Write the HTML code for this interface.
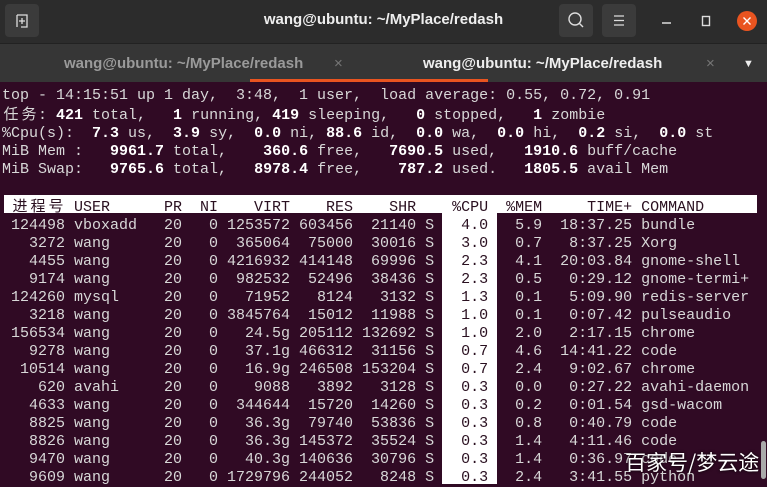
<!DOCTYPE html>
<html><head><meta charset="utf-8"><style>
*{margin:0;padding:0;box-sizing:border-box}
body{width:767px;height:484px;overflow:hidden;background:#300a24;position:relative;font-family:"Liberation Sans","Noto Sans CJK SC",sans-serif}
.title{position:absolute;left:0;top:0;width:767px;height:43px;background:#2c2c2c;}
.title .t{position:absolute;left:0;width:767px;top:11px;text-align:center;color:#eee;font-weight:bold;font-size:15px}
.btn{position:absolute;top:4px;width:34px;height:33px;background:#3b3b3b;border-radius:4px}
.tabs{position:absolute;left:0;top:43px;width:767px;height:39px;background:#363636;border-top:1px solid #222}
.tab{position:absolute;top:11px;font-size:15px;font-weight:bold}
pre{position:absolute;left:2px;top:87px;font-family:"Liberation Mono","Noto Sans CJK SC",monospace;font-size:15px;line-height:18px;color:#d8d8d8;letter-spacing:0}
b{color:#fff;font-weight:bold}
.c{display:inline-block;width:18px;text-align:center;font-family:"Noto Sans CJK SC",sans-serif}
.d{color:#2a1020}
.hdr{position:absolute;left:4px;top:195px;width:753px;height:18px;background:#fff}
.col{position:absolute;left:442px;top:213px;width:55px;height:271px;background:#fff}
</style></head><body>
<div class="title">
 <div class="btn" style="left:5px"><svg width="34" height="33"><path d="M12 11v12M12 11h10v12h-6M17 14v6M14 17h6" stroke="#ddd" stroke-width="1.3" fill="none"/></svg></div>
 <div class="t">wang@ubuntu: ~/MyPlace/redash</div>
 <div class="btn" style="left:559px"><svg width="34" height="33"><circle cx="16" cy="15" r="6" stroke="#ddd" stroke-width="1.4" fill="none"/><path d="M20 19l4 4" stroke="#ddd" stroke-width="1.4"/></svg></div>
 <div class="btn" style="left:602px"><svg width="34" height="33"><path d="M12 12h10M12 16.5h10M12 21h10" stroke="#ddd" stroke-width="1.3"/></svg></div>
 <svg style="position:absolute;left:660px;top:10px" width="100" height="24"><path d="M2 13h9" stroke="#ddd" stroke-width="1.5"/><rect x="42.5" y="6.5" width="7" height="9" stroke="#ddd" stroke-width="1.4" fill="none"/><circle cx="87" cy="11" r="10" fill="#e95420"/><path d="M83.5 7.5l7 7M90.5 7.5l-7 7" stroke="#fff" stroke-width="1.4"/></svg>
</div>
<div class="tabs">
 <div class="tab" style="left:64px;color:#9a9a9a">wang@ubuntu: ~/MyPlace/redash</div>
 <div class="tab" style="left:334px;color:#777;font-weight:normal">×</div>
 <div class="tab" style="left:423px;color:#eee">wang@ubuntu: ~/MyPlace/redash</div>
 <div class="tab" style="left:706px;color:#777;font-weight:normal">×</div>
 <div class="tab" style="left:743px;color:#eee;font-size:11px;top:14px">▼</div>
 <div style="position:absolute;left:250px;top:35px;width:238px;height:3px;background:#e95420"></div>
</div>
<div class="hdr"></div>
<div class="col"></div>
<pre>top - 14:15:51 up 1 day,  3:48,  1 user,  load average: 0.55, 0.72, 0.91
<span class="c">任</span><span class="c">务</span>: <b>421</b> total,   <b>1</b> running, <b>419</b> sleeping,   <b>0</b> stopped,   <b>1</b> zombie
%Cpu(s):  <b>7.3</b> us,  <b>3.9</b> sy,  <b>0.0</b> ni, <b>88.6</b> id,  <b>0.0</b> wa,  <b>0.0</b> hi,  <b>0.2</b> si,  <b>0.0</b> st
MiB Mem :   <b>9961.7</b> total,    <b>360.6</b> free,   <b>7690.5</b> used,   <b>1910.6</b> buff/cache
MiB Swap:   <b>9765.6</b> total,   <b>8978.4</b> free,    <b>787.2</b> used.   <b>1805.5</b> avail Mem

<span class="d"> <span class="c">进</span><span class="c">程</span><span class="c">号</span> USER      PR  NI    VIRT    RES    SHR    %CPU  %MEM     TIME+ COMMAND</span>
 124498 vboxadd   20   0 1253572 603456  21140 S <span class="d">  4.0</span>   5.9  18:37.25 bundle
   3272 wang      20   0  365064  75000  30016 S <span class="d">  3.0</span>   0.7   8:37.25 Xorg
   4455 wang      20   0 4216932 414148  69996 S <span class="d">  2.3</span>   4.1  20:03.84 gnome-shell
   9174 wang      20   0  982532  52496  38436 S <span class="d">  2.3</span>   0.5   0:29.12 gnome-termi+
 124260 mysql     20   0   71952   8124   3132 S <span class="d">  1.3</span>   0.1   5:09.90 redis-server
   3218 wang      20   0 3845764  15012  11988 S <span class="d">  1.0</span>   0.1   0:07.42 pulseaudio
 156534 wang      20   0   24.5g 205112 132692 S <span class="d">  1.0</span>   2.0   2:17.15 chrome
   9278 wang      20   0   37.1g 466312  31156 S <span class="d">  0.7</span>   4.6  14:41.22 code
  10514 wang      20   0   16.9g 246508 153204 S <span class="d">  0.7</span>   2.4   9:02.67 chrome
    620 avahi     20   0    9088   3892   3128 S <span class="d">  0.3</span>   0.0   0:27.22 avahi-daemon
   4633 wang      20   0  344644  15720  14260 S <span class="d">  0.3</span>   0.2   0:01.54 gsd-wacom
   8825 wang      20   0   36.3g  79740  53836 S <span class="d">  0.3</span>   0.8   0:40.79 code
   8826 wang      20   0   36.3g 145372  35524 S <span class="d">  0.3</span>   1.4   4:11.46 code
   9470 wang      20   0   40.3g 140636  30796 S <span class="d">  0.3</span>   1.4   0:36.97 code
   9609 wang      20   0 1729796 244052   8248 S <span class="d">  0.3</span>   2.4   3:41.55 python</pre>
<div style="position:absolute;left:625px;top:448px;color:#fff;font-size:21px;font-family:'Noto Sans CJK SC',sans-serif;text-shadow:0 0 3px #000;line-height:28px">百家号/梦云途</div>
<div style="position:absolute;left:761px;top:441px;width:5px;height:38px;background:#aaa;border-radius:3px"></div>
</body></html>
